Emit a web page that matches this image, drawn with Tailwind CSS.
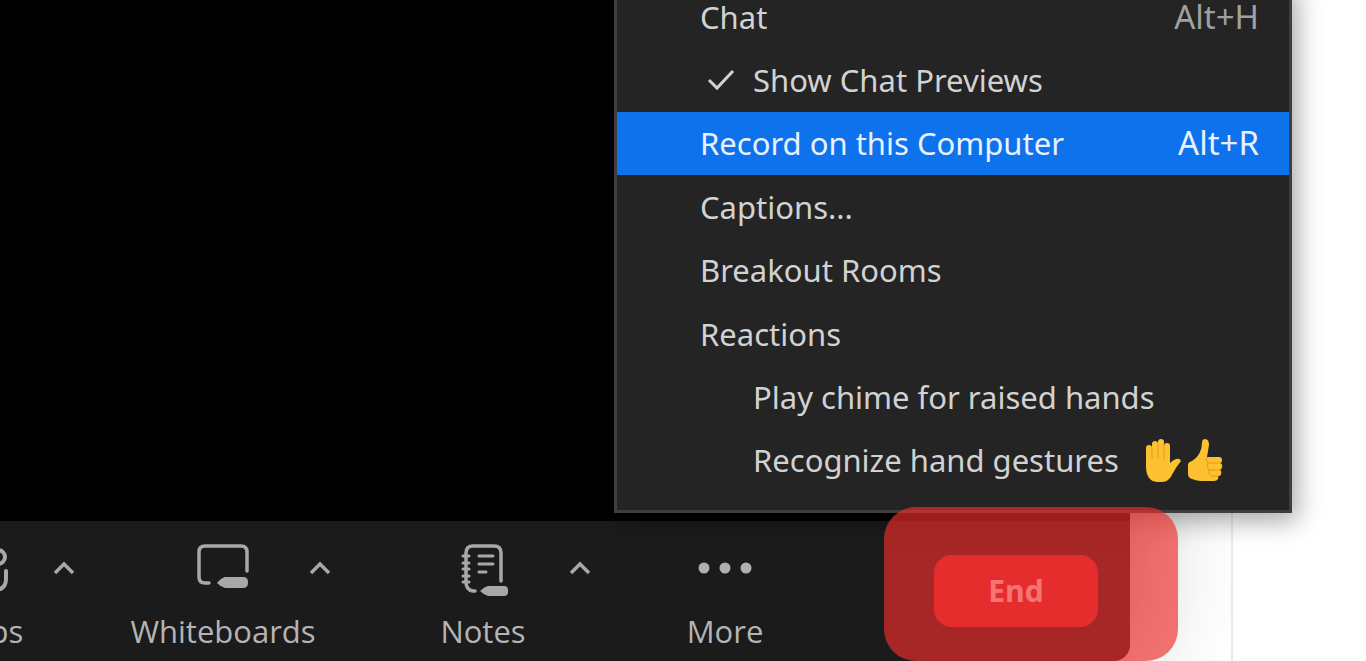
<!DOCTYPE html>
<html lang="en">
  <head>
    <meta charset="UTF-8" />
    <meta name="viewport" content="width=device-width, initial-scale=1.0" />
    <title>Meeting</title>
    <script src="https://cdn.jsdelivr.net/npm/@tailwindcss/browser@4"></script>
  </head>
  <body class="bg-white font-['Open_Sans','Noto_Sans',sans-serif]">
    <div class="relative flex h-screen overflow-hidden">
      <!-- Meeting window -->
      <main class="flex min-w-0 flex-1 flex-col rounded-br-2xl bg-[#1b1b1b] shadow-[0_0_110px_rgba(0,0,0,0.35)]">
        <section class="flex-1 bg-black" aria-label="Video"></section>
        <nav class="flex h-[140px] items-start pt-5 text-[31px] leading-10 text-[#b4b4b4]" aria-label="Meeting controls">
          <button type="button" class="-ml-[50px] flex w-[74px] flex-col items-center">
            <svg class="h-[70px] w-14" viewBox="0 0 56 70" fill="none" stroke="#a8a8a8" stroke-width="4" stroke-linecap="round">
              <circle cx="39" cy="16" r="7" />
              <circle cx="11" cy="16" r="7" />
              <path d="M47 30v8q0 10-10 11M6 30v8q0 10 10 11" />
            </svg>
            <span>Apps</span>
          </button>
          <button type="button" class="ml-7 flex h-[54px] w-6 items-center justify-center" aria-label="Apps options">
            <svg class="h-6 w-6" viewBox="0 0 24 24" fill="none" stroke="#a8a8a8" stroke-width="3.5"><path d="M3 17l9-9 9 9" /></svg>
          </button>
          <button type="button" class="ml-[54px] flex w-[186px] flex-col items-center">
            <svg class="h-[70px] w-14" viewBox="0 0 56 70" fill="none" stroke="#a8a8a8" stroke-width="3.5" stroke-linecap="round">
              <path d="M14 42h-4q-6 0-6-6V11q0-6 6-6h36q6 0 6 6v19" />
              <path d="M22 42q4-5 8-6h18q5 0 5 5v1q0 5-5 5H30q-4-1-8-5z" fill="#a8a8a8" stroke="none" />
            </svg>
            <span>Whiteboards</span>
          </button>
          <button type="button" class="-ml-2 flex h-[54px] w-6 items-center justify-center" aria-label="Whiteboards options">
            <svg class="h-6 w-6" viewBox="0 0 24 24" fill="none" stroke="#a8a8a8" stroke-width="3.5"><path d="M3 17l9-9 9 9" /></svg>
          </button>
          <button type="button" class="ml-[106px] flex w-[90px] flex-col items-center">
            <svg class="h-[70px] w-14" viewBox="0 0 56 70" fill="none" stroke="#a8a8a8" stroke-width="3.5" stroke-linecap="round">
              <path d="M20 50h-2q-7-1-7-9V12q0-7 7-7h21q7 0 7 7v28" />
              <path d="M24 15h14M24 23h14M24 31h7" stroke-width="3" />
              <path d="M8 15h6M8 22h6M8 28h6M8 35h6M8 41h6" stroke-width="3" />
              <path d="M25 50q4-4 8-5h16q4 0 4 4v2q0 4-4 4H33q-4-1-8-5z" fill="#a8a8a8" stroke="none" />
            </svg>
            <span>Notes</span>
          </button>
          <button type="button" class="ml-10 flex h-[54px] w-6 items-center justify-center" aria-label="Notes options">
            <svg class="h-6 w-6" viewBox="0 0 24 24" fill="none" stroke="#a8a8a8" stroke-width="3.5"><path d="M3 17l9-9 9 9" /></svg>
          </button>
          <button type="button" class="ml-[93px] flex w-20 flex-col items-center">
            <svg class="h-[70px] w-14" viewBox="0 0 56 70" fill="#b0b0b0">
              <circle cx="7" cy="27" r="5.5" />
              <circle cx="28" cy="27" r="5.5" />
              <circle cx="49" cy="27" r="5.5" />
            </svg>
            <span>More</span>
          </button>
          <button type="button" class="mt-[14px] mr-8 ml-auto h-[72px] w-[164px] rounded-[18px] bg-[#d42d2d] text-[30px] font-bold text-white">End</button>
        </nav>
      </main>
      <aside class="flex w-[236px] justify-end">
        <div class="w-[135px] border-l-2 border-[#ebebeb] bg-white"></div>
      </aside>

      <!-- More menu -->
      <div
        class="absolute -top-[18px] right-[74px] grid h-[531px] w-[678px] auto-rows-fr border-3 border-[#3e3e3e] bg-[#242424] pb-[18px] font-['Noto_Sans','Open_Sans',sans-serif] text-[31px] leading-10 text-[#d2d2d2] shadow-[5px_8px_24px_rgba(0,0,0,0.35)]"
        role="menu"
      >
        <button type="button" role="menuitem" class="flex items-center justify-between pr-[30px] pl-[83px]">
          <span>Chat</span><span class="text-[33px] text-[#a0a0a0]">Alt+H</span>
        </button>
        <button type="button" role="menuitemcheckbox" aria-checked="true" class="flex items-center pl-[88px]">
          <svg class="mr-4 h-8 w-8" viewBox="0 0 32 32" fill="none" stroke="#d2d2d2" stroke-width="3"><path d="M4 16l8 8L28 7" /></svg>
          <span>Show Chat Previews</span>
        </button>
        <button type="button" role="menuitem" class="flex items-center justify-between bg-[#0e72ed] pr-[30px] pl-[83px] text-[#e8f1fd]">
          <span>Record on this Computer</span><span class="text-[33px]">Alt+R</span>
        </button>
        <button type="button" role="menuitem" class="flex items-center pl-[83px]">Captions...</button>
        <button type="button" role="menuitem" class="flex items-center pl-[83px]">Breakout Rooms</button>
        <button type="button" role="menuitem" class="flex items-center pl-[83px]">Reactions</button>
        <button type="button" role="menuitem" class="flex items-center pl-[136px]">Play chime for raised hands</button>
        <button type="button" role="menuitem" class="flex items-center pl-[136px]">
          <span>Recognize hand gestures</span>
          <svg class="ml-auto mr-16 h-11 w-20" viewBox="0 0 80 44">
            <path d="M1 10q0-3 3-3t3 3V6q0-3 3-3t3 3V4q0-3 3-3t3 3v4q0-3 3-3t3 3v17q3-3 6-4 4-1 5 2-5 6-8 12-4 9-11 9h-5Q1 43 1 28z" fill="#fdc030" />
            <path d="M7 10v11M13 6v14M19 6v15" fill="none" stroke="#e59a1c" stroke-width="1" />
            <path d="M43 27q0-3 4-4 6-4 8-9 2-4 2-9 0-4 3-4 4 0 4 6l-2 12h12q3 0 3 3t-2 3q3 1 2 4 0 2-2 3 2 1 1 4 0 2-3 2 1 1 0 3-1 2-4 2H56q-4 0-9-2-4-1-4-5z" fill="#fdc030" />
            <path d="M62 19q-2 3 1 6h13M63 25q-2 4 1 7h11M64 32q-1 4 2 6h7" fill="none" stroke="#e59a1c" stroke-width="1" />
          </svg>
        </button>
      </div>

      <!-- Highlight over the End button -->
      <div class="pointer-events-none absolute right-[188px] bottom-0 h-[154px] w-[294px] rounded-[32px] bg-[#f02e2e]/66"></div>
    </div>
  </body>
</html>
